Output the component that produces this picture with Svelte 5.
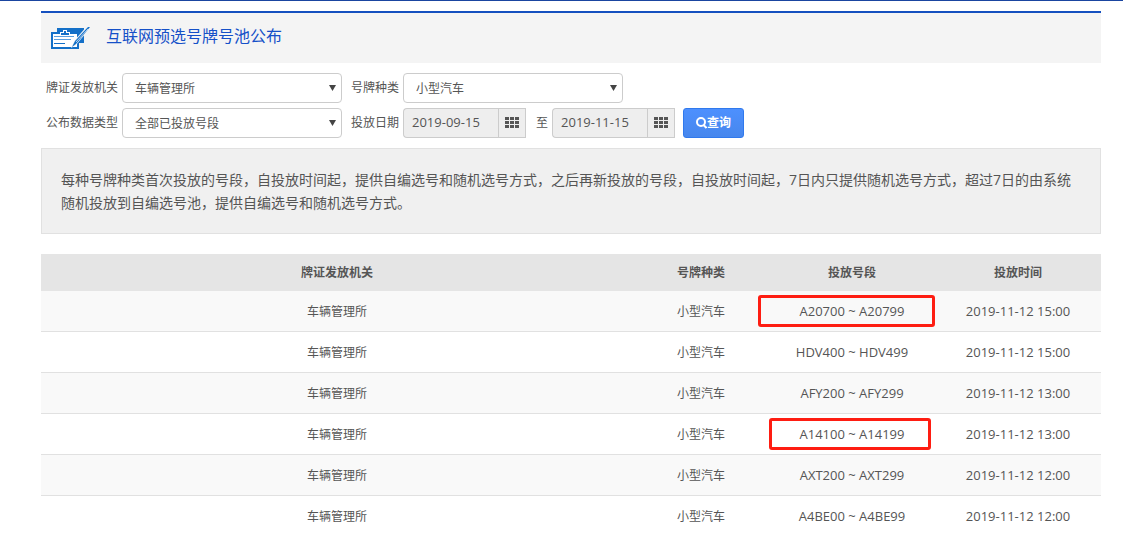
<script>
  let office = $state('车辆管理所');
  let plateType = $state('小型汽车');
  let dataType = $state('全部已投放号段');
  let startDate = $state('2019-09-15');
  let endDate = $state('2019-11-15');

  const rows = [
    { range: 'A20700 ~ A20799', time: '2019-11-12 15:00', mark: 'wide' },
    { range: 'HDV400 ~ HDV499', time: '2019-11-12 15:00' },
    { range: 'AFY200 ~ AFY299', time: '2019-11-12 13:00' },
    { range: 'A14100 ~ A14199', time: '2019-11-12 13:00', mark: 'narrow' },
    { range: 'AXT200 ~ AXT299', time: '2019-11-12 12:00' },
    { range: 'A4BE00 ~ A4BE99', time: '2019-11-12 12:00' }
  ];
</script>

{#snippet gridIcon()}
  <svg width="14" height="11" viewBox="0 0 14 11" fill="#555" aria-hidden="true">
    {#each [0, 4, 8] as y}
      {#each [0, 5, 10] as x}
        <rect {x} {y} width="4" height="3" />
      {/each}
    {/each}
  </svg>
{/snippet}

<div class="page">
  <header class="title-bar">
    <svg width="40" height="24" viewBox="0 0 40 24" aria-hidden="true">
      <path d="M6 2h27v15h-5v6H0V6h6z" fill="#1470c8" />
      <path d="M2 8h7V6h3V4h4v2h3v2h7v13H2z" fill="#fff" />
      <path d="M10 7h3V5h2v2h3v2h-8z" fill="#1470c8" />
      <path d="M3 10.5h20M3 13.5h17" stroke="#5b9fde" />
      <path d="M3 17.5h11" stroke="#1470c8" />
      <path d="M20 22l3-7L36 0l4 1-15 18z" fill="#f4f4f4" />
      <path d="M21 21l3-6L37 1h2L25 18z" fill="#1470c8" />
      <path d="M25 16L37 3" stroke="#b4d3f0" />
    </svg>
    <h1>互联网预选号牌号池公布</h1>
  </header>

  <form class="filters" onsubmit={(e) => e.preventDefault()}>
    <label for="office">牌证发放机关</label>
    <div class="select">
      <select id="office" bind:value={office}>
        <option>车辆管理所</option>
      </select>
    </div>
    <label for="plate-type">号牌种类</label>
    <div class="select">
      <select id="plate-type" bind:value={plateType}>
        <option>小型汽车</option>
      </select>
    </div>

    <label for="data-type">公布数据类型</label>
    <div class="select">
      <select id="data-type" bind:value={dataType}>
        <option>全部已投放号段</option>
      </select>
    </div>
    <label for="start-date">投放日期</label>
    <div class="dates">
      <div class="date">
        <input id="start-date" type="text" readonly bind:value={startDate} />
        <button type="button" aria-label="选择开始日期">{@render gridIcon()}</button>
      </div>
      <label for="end-date">至</label>
      <div class="date">
        <input id="end-date" type="text" readonly bind:value={endDate} />
        <button type="button" aria-label="选择结束日期">{@render gridIcon()}</button>
      </div>
      <button class="search" type="submit">
        <svg width="11" height="12" viewBox="0 0 11 12" fill="none" stroke="#fff" stroke-width="2" aria-hidden="true">
          <circle cx="5" cy="5" r="4" />
          <path d="M7.5 8l3 3" />
        </svg>查询
      </button>
    </div>
  </form>

  <p class="notice">
    每种号牌种类首次投放的号段，自投放时间起，提供自编选号和随机选号方式，之后再新投放的号段，自投放时间起，7日内只提供随机选号方式，超过7日的由系统随机投放到自编选号池，提供自编选号和随机选号方式。
  </p>

  <table>
    <colgroup>
      <col />
      <col class="col-type" />
      <col class="col-num" />
      <col class="col-num" />
    </colgroup>
    <thead>
      <tr>
        <th>牌证发放机关</th>
        <th>号牌种类</th>
        <th>投放号段</th>
        <th>投放时间</th>
      </tr>
    </thead>
    <tbody>
      {#each rows as row}
        <tr>
          <td>车辆管理所</td>
          <td>小型汽车</td>
          <td class="num">
            {row.range}
            {#if row.mark}<span class="mark {row.mark}"></span>{/if}
          </td>
          <td class="num">{row.time}</td>
        </tr>
      {/each}
    </tbody>
  </table>
</div>

<style>
  :global(body) {
    background: #fff;
    color: #555;
    font: 12px/20px 'Open Sans', 'Noto Sans CJK SC', sans-serif;
  }

  .page {
    border-top: 1px solid #1a45a0;
    padding: 10px 22px 0 41px;
  }

  .title-bar {
    display: flex;
    align-items: center;
    gap: 15px;
    height: 50px;
    padding-left: 10px;
    border-top: 2px solid #1550bf;
    background: #f4f4f4;
  }

  h1 {
    margin: 0;
    padding-bottom: 4px;
    color: #1550c8;
    font-size: 16px;
    font-weight: 400;
  }

  .filters {
    display: grid;
    grid-template-columns: 72px 220px 53px 1fr;
    gap: 5px 4px;
    align-items: center;
    padding: 10px 5px;
  }

  .filters > label:nth-of-type(even) {
    padding-left: 5px;
  }

  .select {
    position: relative;
    width: 220px;
  }

  .select::after {
    content: '';
    position: absolute;
    top: 12px;
    right: 6px;
    width: 7px;
    height: 6px;
    background: #444;
    clip-path: polygon(0 0, 100% 0, 50% 100%);
    pointer-events: none;
  }

  select,
  input,
  button {
    box-sizing: border-box;
    height: 30px;
    margin: 0;
    color: #555;
    font: inherit;
  }

  select {
    display: block;
    width: 100%;
    padding: 2px 12px 0;
    border: 1px solid #ccc;
    border-radius: 4px;
    background: #fff;
    appearance: none;
  }

  .dates,
  .date {
    display: flex;
    align-items: center;
  }

  .dates > label {
    padding: 0 4px 0 10px;
  }

  .date input {
    width: 95px;
    padding: 0 8px 2px;
    border: 1px solid #ccc;
    border-right: 0;
    border-radius: 4px 0 0 4px;
    background: #eee;
    font-size: 13px;
    outline: none;
  }

  .date button {
    display: flex;
    align-items: center;
    justify-content: center;
    width: 28px;
    padding: 0 0 2px;
    border: 1px solid #ccc;
    background: #eee;
  }

  .search {
    display: flex;
    align-items: center;
    justify-content: center;
    width: 61px;
    margin-left: 8px;
    padding: 0;
    border: 1px solid #3079ed;
    border-radius: 3px;
    background: linear-gradient(#4d90fe, #4787ed);
    color: #fff;
    font-weight: 700;
  }

  .notice {
    margin: 0 0 20px;
    padding: 19px;
    border: 1px solid #e1e1e1;
    background: #f0f0f0;
    font-size: 14px;
    line-height: 23px;
  }

  table {
    width: 100%;
    border-collapse: collapse;
    table-layout: fixed;
    text-align: center;
  }

  .col-type {
    width: 136px;
  }

  .col-num {
    width: 166px;
  }

  th {
    height: 37px;
    padding: 0;
    background: #e5e5e5;
  }

  td {
    position: relative;
    height: 38px;
    padding: 2px 0 0;
    border-bottom: 1px solid #e1e1e1;
  }

  tbody tr:nth-child(odd) {
    background: #f9f9f9;
  }

  .num {
    height: 40px;
    padding: 0;
    font-size: 13px;
  }

  .mark {
    position: absolute;
    top: 4px;
    bottom: 4px;
    border: 3px solid #fe1d12;
    border-radius: 3px;
  }

  .wide {
    left: -11px;
    right: 0;
  }

  .narrow {
    left: 0;
    right: 4px;
  }
</style>
